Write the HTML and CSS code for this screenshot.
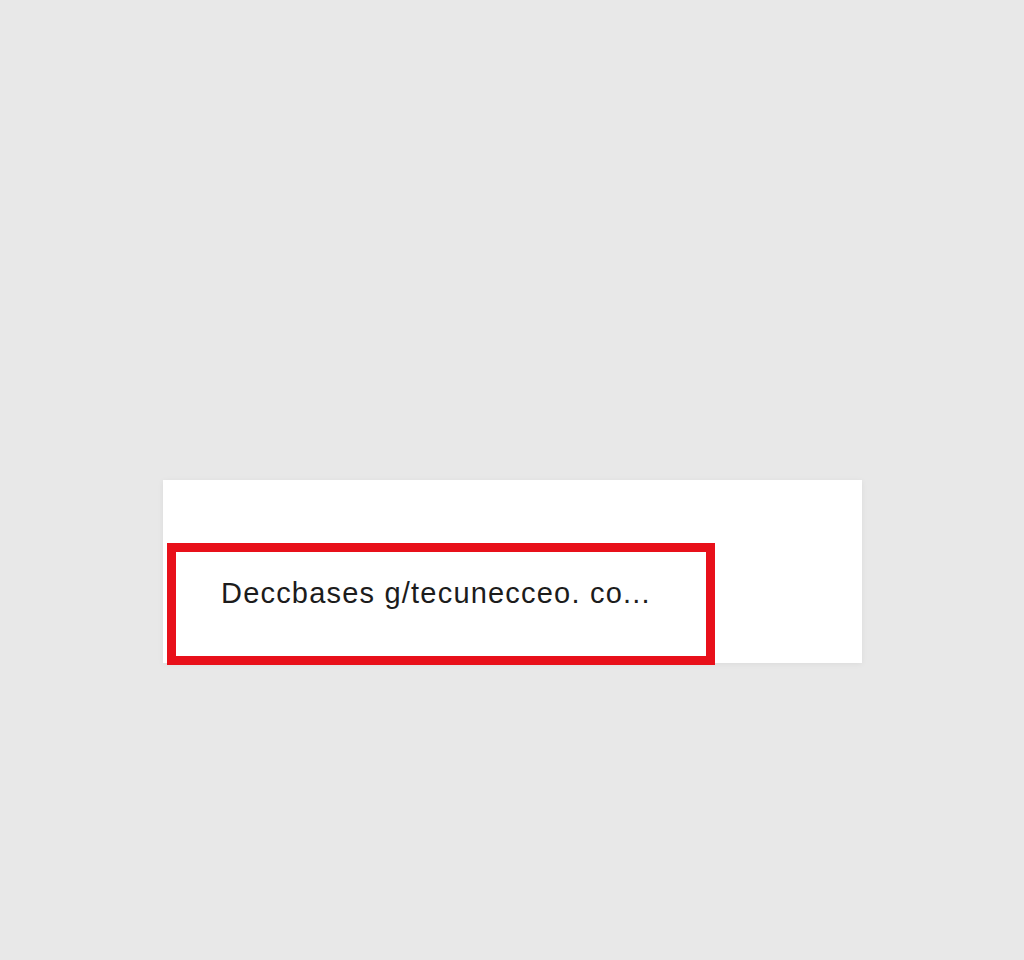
FILE: index.html
```html
<!DOCTYPE html>
<html>
<head>
<meta charset="utf-8">
<link rel="stylesheet" href="styles.css">
</head>
<body>
<main class="stage">
  <section class="card">
    <div class="highlight">
      <span class="url">Deccbases g/tecunecceo. co...</span>
    </div>
  </section>
</main>
</body>
</html>
```

FILE: styles.css
```css
html, body {
  margin: 0;
  padding: 0;
  background: #e8e8e8;
}
.stage {
  width: 1024px;
  height: 960px;
  padding: 480px 0 0 163px;
  box-sizing: border-box;
}
.card {
  width: 699px;
  height: 183px;
  background: #ffffff;
  box-shadow: 0 1px 6px rgba(0,0,0,0.06);
  padding: 63px 0 0 4px;
  box-sizing: border-box;
}
.highlight {
  width: 548px;
  height: 122px;
  border: 9px solid #e8101a;
  box-sizing: border-box;
  display: flex;
  align-items: center;
  padding: 0 0 21px 45px;
  background: #ffffff;
}
.url {
  font-family: "Liberation Sans", Arial, sans-serif;
  font-size: 29px;
  color: #1c1c1c;
  letter-spacing: 1.2px;
  white-space: nowrap;
}
```
